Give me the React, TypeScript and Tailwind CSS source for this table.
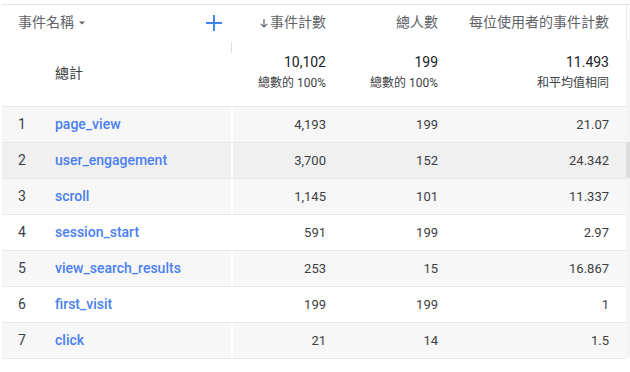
import React from "react";

const rows = [
  { i: 1, name: "page_view", a: "4,193", b: "199", c: "21.07", bg: "bg-[#f7f7f7]" },
  { i: 2, name: "user_engagement", a: "3,700", b: "152", c: "24.342", bg: "bg-[#f0f0f0]" },
  { i: 3, name: "scroll", a: "1,145", b: "101", c: "11.337", bg: "bg-[#f7f7f7]" },
  { i: 4, name: "session_start", a: "591", b: "199", c: "2.97", bg: "bg-white" },
  { i: 5, name: "view_search_results", a: "253", b: "15", c: "16.867", bg: "bg-[#f7f7f7]" },
  { i: 6, name: "first_visit", a: "199", b: "199", c: "1", bg: "bg-white" },
  { i: 7, name: "click", a: "21", b: "14", c: "1.5", bg: "bg-[#f7f7f7]" },
];

const font = { fontFamily: 'Roboto, "Noto Sans CJK TC", sans-serif' };

export default function App() {
  return (
    <div className="w-[630px] h-[372px] bg-white overflow-hidden" style={font}>
      <div className="h-[4px]" />
      <div className="flex border-t border-[#e3e3e3] ml-[2px]">
        <div className="w-[624px]">
          {/* header */}
          <div className="flex h-[35px] items-center text-[14px] text-[#5f6368]">
            <div className="w-[229px] flex items-center pl-[16px] pr-[8px]">
              <span>事件名稱</span>
              <svg width="10" height="10" viewBox="0 0 10 10" className="ml-[3px] mt-[1px]">
                <path d="M2 3.5 L8 3.5 L5 6.5 Z" fill="#5f6368" />
              </svg>
              <div className="flex-1" />
              <svg width="18" height="18" viewBox="0 0 18 18">
                <path d="M9 1 V17 M1 9 H17" stroke="#4285f4" strokeWidth="2" />
              </svg>
            </div>
            <div className="w-[111px] flex items-center justify-end pr-[16px]">
              <svg width="10" height="12" viewBox="0 0 10 12" className="mr-[1px]">
                <path d="M5 2 V10 M1.8 6.8 L5 10 L8.2 6.8" stroke="#5f6368" strokeWidth="1.2" fill="none" />
              </svg>
              <span>事件計數</span>
            </div>
            <div className="w-[112px] text-right pr-[16px]">總人數</div>
            <div className="w-[172px] text-right pr-[17px]">每位使用者的事件計數</div>
          </div>
          {/* totals */}
          <div className="flex h-[66px] text-[#202124]">
            <div className="w-[53px]" />
            <div className="w-[176px] flex items-center text-[14px] text-[#3c4043]">總計</div>
            <div className="w-[111px] flex flex-col items-end pr-[16px] pt-[12px] border-l border-[#e0e0e0] border-l-0 relative">
              <div className="absolute left-0 top-[2px] h-[11px] w-px bg-[#e0e0e0]" />
              <div className="text-[14px] leading-[20px]">10,102</div>
              <div className="text-[12px] leading-[16px] mt-[3px] text-[#3c4043]">總數的 100%</div>
            </div>
            <div className="w-[112px] flex flex-col items-end pr-[16px] pt-[12px]">
              <div className="text-[14px] leading-[20px]">199</div>
              <div className="text-[12px] leading-[16px] mt-[3px] text-[#3c4043]">總數的 100%</div>
            </div>
            <div className="w-[172px] flex flex-col items-end pr-[17px] pt-[12px]">
              <div className="text-[14px] leading-[20px]">11.493</div>
              <div className="text-[12px] leading-[16px] mt-[3px] text-[#3c4043]">和平均值相同</div>
            </div>
          </div>
          {/* rows */}
          {rows.map((r) => (
            <div
              key={r.i}
              className={`flex h-[36px] border-t border-[#e8e8e8] ${r.bg} text-[13px] text-[#3c4043]`}
            >
              <div className="w-[53px] flex items-center pl-[16px] text-[14px]">{r.i}</div>
              <div className="w-[176px] flex items-center text-[14px] font-medium text-[#4a80f0]">
                {r.name}
              </div>
              <div className="w-[2px] bg-white" />
              <div className="w-[109px] flex items-center justify-end pr-[16px]">{r.a}</div>
              <div className="w-[112px] flex items-center justify-end pr-[16px]">{r.b}</div>
              <div className="w-[172px] flex items-center justify-end pr-[17px]">{r.c}</div>
            </div>
          ))}
          <div className="border-t border-[#e8e8e8]" />
        </div>
        <div className="w-[4px] flex flex-col">
          <div className="h-[35px] border-l border-[#ececec]" />
          <div className="h-[66px] bg-[#f4f4f4]" />
          <div className="h-[36px] bg-[#f4f4f4]" />
          <div className="h-[36px] bg-[#dedede]" />
          <div className="h-[180px] bg-[#f4f4f4]" />
        </div>
      </div>
    </div>
  );
}
